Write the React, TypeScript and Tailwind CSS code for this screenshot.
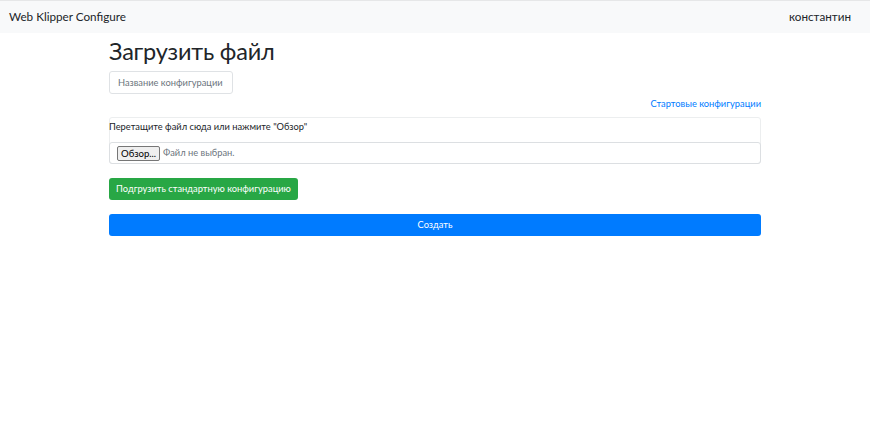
export default function App() {
  const font = { fontFamily: 'Lato, "Noto Sans", sans-serif' };
  return (
    <div className="min-h-[431px] bg-white text-[#212529]" style={font}>
      <nav className="h-[33px] bg-[#f8f9fa] border-t border-[#e6e7e8] flex items-center justify-between pl-[9px] pr-[19px]">
        <span className="text-[11.7px] text-[#212529]">Web Klipper Configure</span>
        <span className="text-[11.7px] text-[#212529]">константин</span>
      </nav>
      <div className="w-[652px] mx-auto">
        <h1 className="text-[23.5px] tracking-[-0.2px] leading-[34px] mt-[1px] font-normal">Загрузить файл</h1>
        <div className="mt-[3px] w-[124px] h-[23px] border border-[#dfe2e5] rounded-[3px] flex items-center pl-[8px]">
          <span className="text-[9.3px] text-[#6c757d]">Название конфигурации</span>
        </div>
        <div className="flex justify-end mt-[2px] h-[16px] items-center">
          <span className="text-[9.3px] text-[#007bff]">Стартовые конфигурации</span>
        </div>
        <div className="mt-[5px] border border-[#eceeef] rounded-[3px] h-[47px] flex flex-col">
          <div className="h-[24px] flex items-start pt-[2px] text-[9.3px] text-[#212529] -ml-[1px]">Перетащите файл сюда или нажмите "Обзор"</div>
          <div className="flex-1 border border-[#dcdfe2] rounded-[3px] -mx-[1px] -mb-[1px] flex items-center pl-[7px] gap-[3px]">
            <span className="h-[15px] px-[3px] border border-[#767676] rounded-[2px] bg-[#efefef] text-[9.6px] leading-[13px] text-black">Обзор...</span>
            <span className="text-[9.3px] text-[#6c757d]">Файл не выбран.</span>
          </div>
        </div>
        <div className="mt-[14px] w-[189px] h-[22px] bg-[#28a745] rounded-[3px] flex items-center justify-center text-white text-[9.3px]">Подгрузить стандартную конфигурацию</div>
        <div className="mt-[14px] h-[22px] bg-[#007bff] rounded-[3px] flex items-center justify-center text-white text-[9.3px]">Создать</div>
      </div>
    </div>
  );
}
